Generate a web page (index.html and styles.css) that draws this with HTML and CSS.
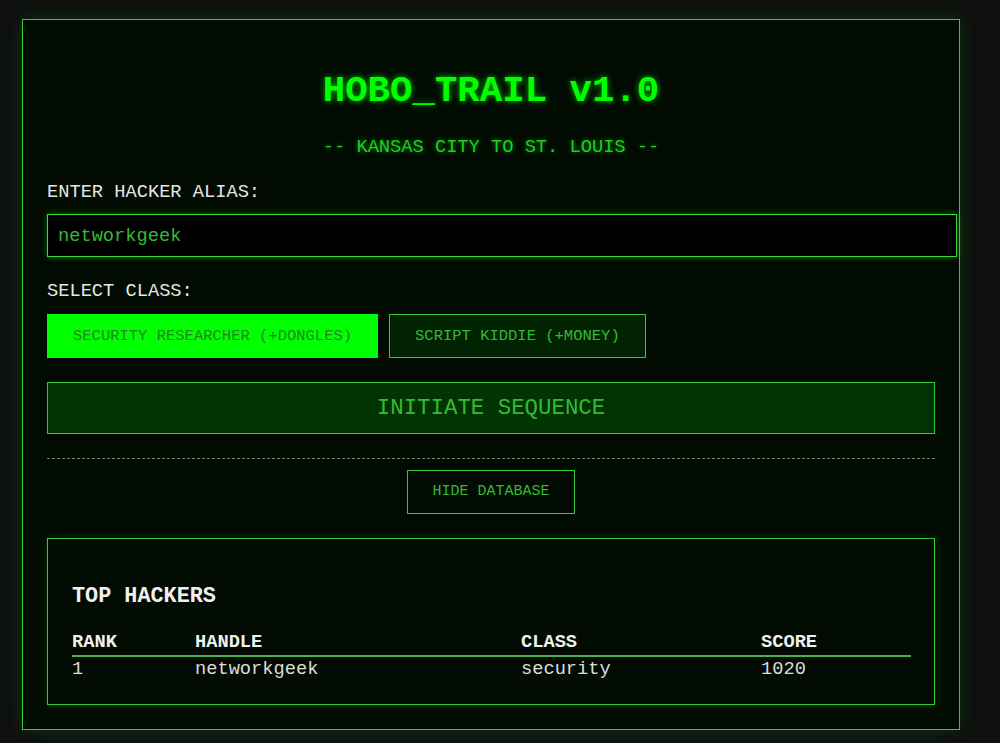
FILE: index.html
```html
<!DOCTYPE html>
<html lang="en">

<head>
  <meta charset="UTF-8" />
  <meta name="viewport" content="width=device-width, initial-scale=1.0">
  <title>HOBO_TRAIL v1.0</title>
  <link rel="stylesheet" href="styles.css">
</head>

<body>
  <div class="terminal">
    <h1 class="title">HOBO_TRAIL v1.0</h1>
    <p class="subtitle">-- KANSAS CITY TO ST. LOUIS --</p>

    <label class="field-label" for="alias">ENTER HACKER ALIAS:</label>
    <input id="alias" class="alias-input" type="text" value="networkgeek">

    <div class="field-label">SELECT CLASS:</div>
    <div class="class-options">
      <button class="class-btn selected">SECURITY RESEARCHER (+DONGLES)</button>
      <button class="class-btn">SCRIPT KIDDIE (+MONEY)</button>
    </div>

    <button class="start-btn">INITIATE SEQUENCE</button>

    <hr class="divider">

    <div class="db-toggle">
      <button class="toggle-btn">HIDE DATABASE</button>
    </div>

    <div class="leaderboard">
      <h3>TOP HACKERS</h3>
      <table class="scores">
        <colgroup>
          <col class="col-rank">
          <col class="col-handle">
          <col class="col-class">
          <col class="col-score">
        </colgroup>
        <thead>
          <tr>
            <th>RANK</th>
            <th>HANDLE</th>
            <th>CLASS</th>
            <th>SCORE</th>
          </tr>
        </thead>
        <tbody>
          <tr>
            <td>1</td>
            <td>networkgeek</td>
            <td>security</td>
            <td>1020</td>
          </tr>
        </tbody>
      </table>
    </div>
  </div>
</body>

</html>
```

FILE: styles.css
```css
body {
  font-family: 'Liberation Mono', 'Courier New', monospace;
  font-size: 18.7px;
  background: #0e0f0e;
  color: #e6e6e6;
  margin: 0;
  padding: 19px 40px 14px 22px;
}

.terminal {
  width: 938px;
  box-sizing: border-box;
  background: #020b02;
  border: 1px solid #33cc33;
  padding: 24px;
  box-shadow: 0 0 18px rgba(0, 255, 0, 0.15);
  display: flex;
  flex-direction: column;
}

.title {
  font-size: 37.4px;
  line-height: 44px;
  font-weight: bold;
  color: #00ff00;
  text-align: center;
  margin: 25px 0 0;
  text-shadow: 0 0 6px rgba(0, 255, 0, 0.7);
}

.subtitle {
  line-height: 22px;
  color: #22cc22;
  text-align: center;
  margin: 23px 0 0;
  text-shadow: 0 0 5px rgba(0, 255, 0, 0.5);
}

.field-label {
  display: block;
  line-height: 22px;
  color: #e6e6e6;
  margin-top: 23px;
}

.alias-input {
  display: block;
  margin-top: 11px;
  padding: 10px;
  line-height: 21px;
  height: 43px;
  box-sizing: border-box;
  width: 910px;
  font-family: inherit;
  font-size: 18.7px;
  color: #33bb33;
  background: #000;
  border: 1px solid #33dd33;
  box-shadow: 0 0 6px rgba(0, 255, 0, 0.45);
  outline: none;
}

.class-options {
  display: flex;
  gap: 11px;
  margin-top: 12px;
}

.class-btn {
  font-family: inherit;
  font-size: 15.5px;
  line-height: 18px;
  padding: 12px 25px;
  background: #022302;
  color: #33bb33;
  border: 1px solid #33cc33;
}

.class-btn.selected {
  background: #00ff00;
  color: #1c8a1c;
  border-color: #00ff00;
}

.start-btn {
  margin-top: 24px;
  font-family: inherit;
  font-size: 22.4px;
  line-height: 26px;
  padding: 12px 0;
  background: #023302;
  color: #33bb33;
  border: 1px solid #33cc33;
}

.divider {
  border: 0;
  border-top: 1px dashed #5e8f5e;
  margin: 24px 0 0;
}

.db-toggle {
  display: flex;
  justify-content: center;
  margin-top: 11px;
}

.toggle-btn {
  font-family: inherit;
  font-size: 15px;
  line-height: 18px;
  padding: 12px 24px;
  background: transparent;
  color: #33bb33;
  border: 1px solid #33cc33;
}

.leaderboard {
  margin-top: 24px;
  border: 1px solid #33cc33;
  padding: 24px;
  box-shadow: 0 0 10px rgba(0, 255, 0, 0.15);
}

.leaderboard h3 {
  font-size: 21.8px;
  line-height: 26px;
  margin: 21px 0 21px;
  color: #f0f0f0;
}

.scores {
  width: 839px;
  border-collapse: collapse;
  table-layout: fixed;
}

.col-rank {
  width: 123px;
}

.col-handle {
  width: 326px;
}

.col-class {
  width: 240px;
}

.scores th,
.scores td {
  text-align: left;
  padding: 0;
  line-height: 22px;
}

.scores th {
  color: #f0f0f0;
  padding-bottom: 2px;
  border-bottom: 2px solid #4caf50;
}

.scores td {
  color: #dcdcdc;
  padding-top: 1px;
}
```
